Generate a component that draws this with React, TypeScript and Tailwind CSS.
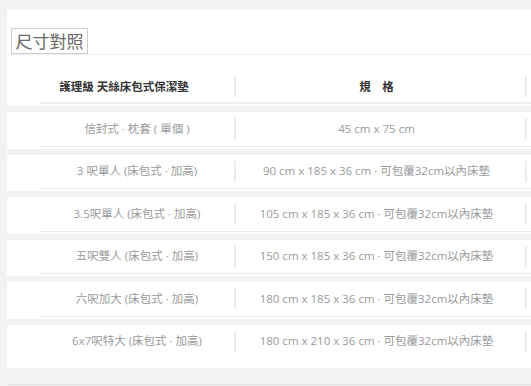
const rows = [
  ["信封式 · 枕套 ( 單個 )", "45 cm x 75 cm"],
  ["3 呎單人 (床包式 · 加高)", "90 cm x 185 x 36 cm · 可包覆32cm以內床墊"],
  ["3.5呎單人 (床包式 · 加高)", "105 cm x 185 x 36 cm · 可包覆32cm以內床墊"],
  ["五呎雙人 (床包式 · 加高)", "150 cm x 185 x 36 cm · 可包覆32cm以內床墊"],
  ["六呎加大 (床包式 · 加高)", "180 cm x 185 x 36 cm · 可包覆32cm以內床墊"],
  ["6x7呎特大 (床包式 · 加高)", "180 cm x 210 x 36 cm · 可包覆32cm以內床墊"],
];

function Divider() {
  return <div className="w-[2px] h-[21px] bg-[#ececec] shrink-0"></div>;
}

export default function App() {
  return (
    <div className="w-[531px] h-[386px] overflow-hidden bg-[#f3f3f3] pl-[7px] pt-[10px] font-['Open_Sans','Noto_Sans_CJK_TC',sans-serif]">
      <div className="bg-white pb-[2px]">
        <div className="pt-[18px] pl-[4px] border-b border-[#eeeeee]">
          <div className="w-[77px] h-[26px] border border-[#cfcfcf] flex items-center justify-center text-[17px] text-[#6a6a6a] leading-none">
            尺寸對照
          </div>
        </div>
        <div className="ml-[33px] pt-[21px] pb-[5px] border-b-2 border-[#efefef] flex items-center">
          <div className="w-[194px] h-[21px] pr-[26px] flex items-center justify-center text-[11.5px] font-bold text-[#333]">
            護理級 天絲床包式保潔墊
          </div>
          <Divider />
          <div className="w-[289px] h-[21px] pr-[8px] flex items-center justify-center text-[11.5px] font-bold text-[#333]">
            規　格
          </div>
          <Divider />
        </div>
      </div>

      <div className="flex flex-col gap-[6px] mt-[6px]">
        {rows.map(([name, size], i) => (
          <div key={name} className={i === rows.length - 1 ? "bg-white h-[43px]" : "bg-white h-[36.5px]"}>
            <div
              className={
                i === rows.length - 1
                  ? "ml-[33px] pt-[6px] pb-[6.5px] flex items-center"
                  : "ml-[33px] pt-[6px] pb-[6.5px] border-b border-[#ebebeb] flex items-center"
              }
            >
              <div className="w-[194px] h-[21px] flex items-center justify-center text-[11.5px] text-[#9a9a9a] whitespace-nowrap">
                {name}
              </div>
              <Divider />
              <div className="w-[289px] h-[21px] pr-[8px] flex items-center justify-center text-[11.5px] text-[#9a9a9a] whitespace-nowrap">
                {size}
              </div>
              <Divider />
            </div>
          </div>
        ))}
      </div>
      <div className="mt-[16px] h-px bg-[#e2e2e2]"></div>
    </div>
  );
}
